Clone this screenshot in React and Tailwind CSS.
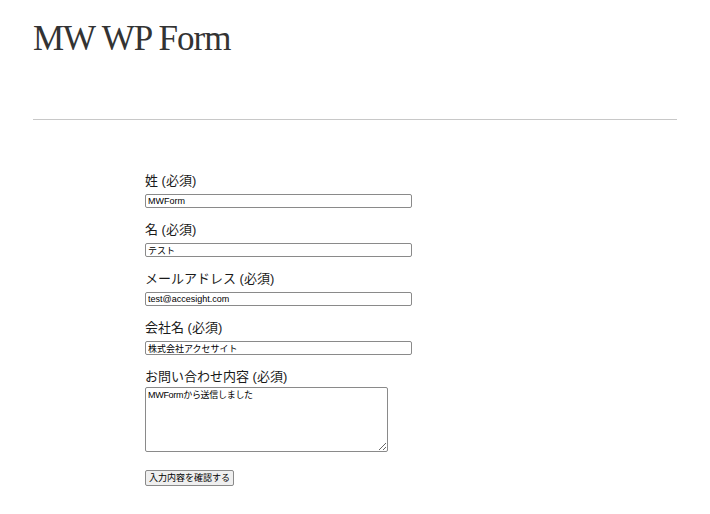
import React from 'react';

const FIELDS = [
  { label: '姓 (必須)', value: 'MWForm' },
  { label: '名 (必須)', value: 'テスト' },
  { label: 'メールアドレス (必須)', value: 'test@accesight.com' },
  { label: '会社名 (必須)', value: '株式会社アクセサイト' },
];

const sans = "font-['Liberation_Sans','Noto_Sans_CJK_JP',sans-serif]";

export default function App() {
  return (
    <div className="min-h-[514px] bg-white px-[33px] text-[#222]">
      <h1 className="mt-[21px] font-['Liberation_Serif',serif] text-[35px] font-normal leading-none tracking-[-1px] text-[#333]">
        MW WP Form
      </h1>
      <hr className="mt-[63px] border-0 border-t border-[#c8c8c8]" />

      <form className={`pl-[112px] pt-[52px] ${sans}`} onSubmit={(e) => e.preventDefault()}>
        {FIELDS.map((f) => (
          <div key={f.label} className="mb-[13px]">
            <label className="block text-[13px] leading-[18px] text-[#1a1a1a]">{f.label}</label>
            <input
              type="text"
              defaultValue={f.value}
              className="mt-[4px] block h-[14px] w-[267px] rounded-[2px] border border-[#8a8a8a] px-[2px] text-[9px] leading-none text-black"
            />
          </div>
        ))}

        <div>
          <label className="block text-[13px] leading-[18px] text-[#1a1a1a]">お問い合わせ内容 (必須)</label>
          <textarea
            defaultValue="MWFormから送信しました"
            className="mt-px block h-[65px] w-[243px] rounded-[2px] border border-[#8a8a8a] px-[2px] py-[1px] text-[9px] leading-[12px] tracking-[-0.3px] text-black"
          />
        </div>

        <button
          type="submit"
          className="mt-[18px] block h-[16px] rounded-[2px] border border-[#8a8a8a] bg-[#efefef] px-[3px] text-[9px] leading-none text-black"
        >
          入力内容を確認する
        </button>
      </form>
    </div>
  );
}
